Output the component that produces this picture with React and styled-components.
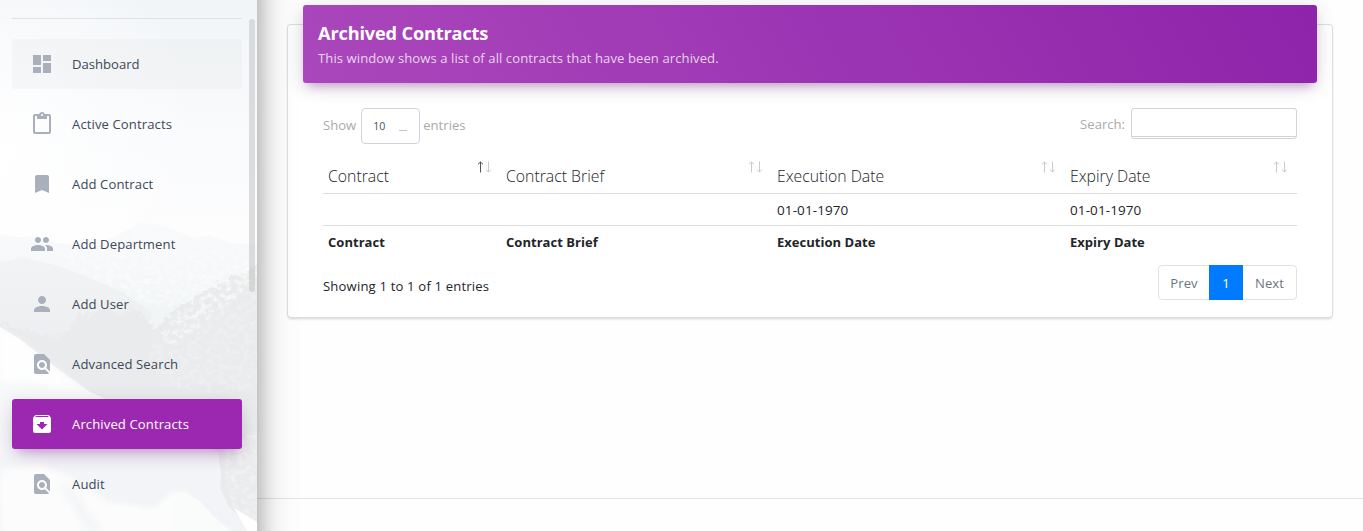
import React from 'react';
import styled, { createGlobalStyle, css } from 'styled-components';
import { MdDashboard, MdContentPaste, MdBookmark, MdPeople, MdPerson, MdFindInPage, MdArchive } from 'react-icons/md';

const Global = createGlobalStyle`
  *, *::before, *::after { box-sizing: border-box; }
  body { margin: 0; background: #fefefe; overflow: hidden; font: 13.1px/20px "Open Sans", "Noto Sans", sans-serif; color: #212529; }
`;

const Page = styled.div`
  display: flex;
  height: 531px;
  overflow: hidden;
`;

const Sidebar = styled.aside`
  position: relative;
  z-index: 2;
  flex: 0 0 257px;
  height: 100%;
  padding: 18px 15px 0 12px;
  background: #fafbfc;
  &::after {
    content: '';
    position: absolute;
    left: 100%;
    top: 0;
    bottom: 0;
    width: 46px;
    background: linear-gradient(90deg, rgba(0, 0, 0, .225), rgba(0, 0, 0, .16) 6px, rgba(0, 0, 0, .085) 13px, rgba(0, 0, 0, .035) 21px, rgba(0, 0, 0, .012) 31px, transparent);
    pointer-events: none;
  }
`;

const Backdrop = styled.svg`
  position: absolute;
  inset: 0;
  width: 257px;
  height: 531px;
`;

const ScrollThumb = styled.div`
  position: absolute;
  left: 249px;
  top: 19px;
  width: 6px;
  height: 273px;
  border-radius: 3px;
  background: rgba(190, 190, 190, .5);
`;

const Nav = styled.nav`
  position: relative;
  display: flex;
  flex-direction: column;
  gap: 10px;
  padding-top: 20px;
  border-top: 1px solid #dfe2e4;
`;

const NavItem = styled.a`
  display: flex;
  align-items: center;
  flex: 0 0 50px;
  padding-left: 18px;
  border-radius: 3px;
  color: #3c4858;
  letter-spacing: .1px;
  svg { width: 24px; height: 24px; margin-right: 18px; color: #a9afbb; }
  ${p => p.$hover && css`background: rgba(210, 205, 205, .13); letter-spacing: 0;`}
  ${p => p.$active && css`
    background: #9c27b0;
    color: #fff;
    box-shadow: 0 12px 20px -10px rgba(156, 39, 176, .28), 0 4px 20px 0 rgba(0, 0, 0, .12), 0 7px 8px -5px rgba(156, 39, 176, .2);
    svg { color: #fff; }
  `}
`;

const Main = styled.main`
  flex: 1;
  display: flex;
  flex-direction: column;
  padding-top: 25px;
`;

const Card = styled.section`
  margin: 0 31px;
  height: 292px;
  padding: 0 15px;
  background: #fff;
  border-radius: 3px;
  box-shadow: 0 0 0 1px #dedede, 0 2px 3px rgba(0, 0, 0, .17);
`;

const CardHeader = styled.header`
  height: 78px;
  margin-top: -20px;
  padding: 16px 15px 0;
  border-radius: 3px;
  background: linear-gradient(60deg, #ab47bc, #8e24aa);
  box-shadow: 0 4px 20px 0 rgba(0, 0, 0, .14), 0 7px 10px -5px rgba(156, 39, 176, .4);
  color: #fff;
`;

const Title = styled.h4`
  margin: 0;
  font-size: 18.2px;
  line-height: 24px;
  font-weight: 700;
  letter-spacing: -.17px;
`;

const Subtitle = styled.p`
  margin: 3px 0 0;
  line-height: 20px;
  letter-spacing: .07px;
  color: rgba(255, 255, 255, .78);
`;

const CardBody = styled.div`
  padding: 25px 20px 0;
`;

const Toolbar = styled.div`
  display: flex;
  justify-content: space-between;
  height: 51px;
  color: #aaa;
`;

const Control = styled.label`
  display: flex;
  align-items: center;
  height: ${p => p.$h}px;
  gap: ${p => p.$gap}px;
`;

const Caption = styled.span`
  margin-top: ${p => p.$lift || 0}px;
`;

const LengthSelect = styled.span`
  display: flex;
  align-items: center;
  justify-content: space-between;
  width: 59px;
  height: 36px;
  margin: 0 -1px 0 1px;
  padding: 0 12px 0 11px;
  border: 1px solid #d2d2dc;
  border-radius: 4px;
  background: #fff;
  color: #495057;
  font-size: 10.6px;
`;

const Dash = styled.i`
  width: 8px;
  height: 1px;
  margin-top: 9px;
  background: #c4c4c4;
`;

const SearchBox = styled.span`
  width: 166px;
  height: 31px;
  border: 1px solid #d2d2d8;
  border-radius: 3px;
  background: linear-gradient(#d2d2d8, #d2d2d8) 0 27px / 100% 1px no-repeat #fff;
`;

const Table = styled.table`
  width: 974px;
  table-layout: fixed;
  border-collapse: collapse;
`;

const Row = styled.tr`
  height: ${p => p.$h}px;
  border-bottom: ${p => (p.$line ? '1px solid #dcdcdc' : 'none')};
`;

const Cell = styled.td`
  padding: 2px 5px 0;
  text-align: left;
  font-weight: ${p => (p.$bold ? 700 : 400)};
  font-size: ${p => (p.$bold ? 13 : 13.5)}px;
  letter-spacing: ${p => (p.$bold ? .03 : .1)}px;
`;

const HeadCell = styled.th`
  padding: 0 5px;
  width: ${p => p.$w}px;
  text-align: left;
  font-weight: 300;
  vertical-align: top;
`;

const HeadInner = styled.div`
  display: flex;
  justify-content: space-between;
  padding-right: 4px;
  font-size: 15.8px;
  line-height: 34px;
  height: 33px;
`;

const SortIcon = styled.svg`
  width: 15px;
  height: 12px;
  margin-top: 2px;
  fill: none;
`;

const Bottom = styled.div`
  display: flex;
  justify-content: space-between;
  padding-top: 8px;
`;

const Info = styled.span`
  padding-top: 11px;
  letter-spacing: .17px;
`;

const Pager = styled.div`
  display: flex;
  height: 35px;
  border: 1px solid #dee2e6;
  border-radius: 4px;
`;

const PageButton = styled.span`
  width: ${p => p.$w}px;
  margin: -1px 0;
  line-height: 36px;
  text-align: center;
  letter-spacing: .1px;
  color: ${p => (p.$active ? '#fff' : '#6c757d')};
  background: ${p => (p.$active ? '#007bff' : 'transparent')};
`;

const FooterRule = styled.footer`
  height: 33px;
  margin-top: auto;
  border-top: 1px solid #e3e3e3;
`;

const NAV = [
  { label: 'Dashboard', Icon: MdDashboard, hover: true },
  { label: 'Active Contracts', Icon: MdContentPaste },
  { label: 'Add Contract', Icon: MdBookmark },
  { label: 'Add Department', Icon: MdPeople },
  { label: 'Add User', Icon: MdPerson },
  { label: 'Advanced Search', Icon: MdFindInPage },
  { label: 'Archived Contracts', Icon: MdArchive, active: true },
  { label: 'Audit', Icon: MdFindInPage },
];

const COLUMNS = [
  { label: 'Contract', w: 178, sorted: true },
  { label: 'Contract Brief', w: 271 },
  { label: 'Execution Date', w: 293 },
  { label: 'Expiry Date', w: 232 },
];

function Mountains() {
  return (
    <Backdrop viewBox="0 0 257 531" aria-hidden="true">
      <defs>
        <linearGradient id="sky" x1="0" y1="0" x2="0" y2="1">
          <stop offset="0" stopColor="#f2f5f8" />
          <stop offset=".45" stopColor="#f8fafc" />
          <stop offset=".8" stopColor="#fdfdfe" />
          <stop offset="1" stopColor="#fdfdfd" />
        </linearGradient>
        <radialGradient id="glow" cx="0" cy=".55" r=".8">
          <stop offset="0" stopColor="#fff" stopOpacity=".95" />
          <stop offset="1" stopColor="#fff" stopOpacity="0" />
        </radialGradient>
        <linearGradient id="far" x1="0" y1="0" x2="0" y2="1">
          <stop offset="0" stopColor="#f9fafb" />
          <stop offset=".5" stopColor="#f2f5f6" />
          <stop offset="1" stopColor="#eef0f1" />
        </linearGradient>
        <linearGradient id="near" x1="0" y1="0" x2="0" y2="1">
          <stop offset="0" stopColor="#f1f3f4" />
          <stop offset="1" stopColor="#ebeced" />
        </linearGradient>
        <linearGradient id="snow" x1="0" y1="0" x2="0" y2="1">
          <stop offset="0" stopColor="#fdfdfe" />
          <stop offset=".4" stopColor="#f6f7f9" />
          <stop offset="1" stopColor="#f1f3f6" />
        </linearGradient>
        <filter id="soft" x="-10%" y="-10%" width="120%" height="120%" colorInterpolationFilters="sRGB">
          <feGaussianBlur stdDeviation="3" />
        </filter>
        <filter id="rock" x="0" y="0" width="100%" height="100%" colorInterpolationFilters="sRGB">
          <feTurbulence type="fractalNoise" baseFrequency=".16 .2" numOctaves="4" seed="8" />
          <feColorMatrix values="0 0 0 0 1  0 0 0 0 1  0 0 0 0 1  3 0 0 0 -1.3" result="n" />
          <feComposite in="n" in2="SourceGraphic" operator="in" />
          <feGaussianBlur stdDeviation=".5" />
        </filter>
        <filter id="edge" x="-5%" y="-5%" width="110%" height="110%" colorInterpolationFilters="sRGB">
          <feTurbulence type="fractalNoise" baseFrequency=".2" numOctaves="3" seed="3" result="t" />
          <feDisplacementMap in="SourceGraphic" in2="t" scale="14" xChannelSelector="R" yChannelSelector="G" />
        </filter>
      </defs>
      <rect width="257" height="280" fill="url(#sky)" />
      <rect width="257" height="280" fill="url(#glow)" />
      <path d="M0 234l17 3 20-1 20 7 38 3 25-12 20-12 24 4 30 12 16-3 20 8 27 2v160H0z" fill="url(#far)" />
      <path d="M60 252l34-10 34-8 34 8 26 14 30-8 39 10v28l-80 24-60-15-34-20z" fill="#fff" opacity=".5" filter="url(#rock)" />
      <path d="M0 262l24-4 28 6 34 12 36 16 30 20-20 80H0z" fill="url(#near)" />
      <path d="M275 258l-46 21-34 18-26 18-14 13-14-16-10-3-14 7-10-14-14 14-14-4-8 18-20 8-35-12-30-5v66l70 53 80 10 43 24 18 36 18 60h50z" fill="#eaebec" filter="url(#edge)" />
      <path d="M257 262l-40 26-42 26-22 26-4 26 20 22 60 8 28-12z" fill="#fff" opacity=".25" filter="url(#rock)" />
      <path d="M257 262l-36 24-34 19-26 28 10 12 34-22 52-44z" fill="#fff" opacity=".6" filter="url(#rock)" />
      <path d="M220 450l37-20v101l-24-20z" fill="#fff" opacity=".35" filter="url(#rock)" />
      <path d="M0 327l20 12 34 27 36 26 36 16 50 22 42 22 3 22-1 14 9 19 28 24H0z" fill="url(#snow)" />
      <path d="M0 329l18 11 34 27 30 22-30-1-26-8L0 382z" fill="#fff" opacity=".8" filter="url(#soft)" />
      <path d="M0 470l40-6 38 18 30 20 46 6 18-16 14 2 18 18 36 25H0z" fill="#fcfcfc" filter="url(#soft)" />
      <path d="M172 494l12-2 16 9 20 22 14 10H170z" fill="#fafbfb" />
      <path d="M234 508l23 14v9h-10z" fill="#fff" />
      <path d="M60 485l12 2 30 44H86z" fill="#f3f5f7" filter="url(#soft)" />
    </Backdrop>
  );
}

function Sort({ sorted }) {
  return (
    <SortIcon viewBox="0 0 15 12">
      <path d="M3.5 11.5V1M1 3.3L3.5 1 6 3.3" stroke={sorted ? '#4b5560' : '#cbcbcb'} />
      <path d="M11.5 .5V11M9 8.7l2.5 2.3L14 8.7" stroke="#cbcbcb" />
    </SortIcon>
  );
}

export default function App() {
  return (
    <Page>
      <Global />
      <Sidebar>
        <Mountains />
        <Nav>
          {NAV.map(({ label, Icon, hover, active }) => (
            <NavItem key={label} $hover={hover} $active={active}>
              <Icon />{label}
            </NavItem>
          ))}
        </Nav>
        <ScrollThumb />
      </Sidebar>
      <Main>
        <Card>
          <CardHeader>
            <Title>Archived Contracts</Title>
            <Subtitle>This window shows a list of all contracts that have been archived.</Subtitle>
          </CardHeader>
          <CardBody>
            <Toolbar>
              <Control $h={36} $gap={4}>
                <Caption $lift={-2}>Show</Caption>
                <LengthSelect>10<Dash /></LengthSelect>
                <Caption $lift={-2}>entries</Caption>
              </Control>
              <Control $h={31} $gap={6}>
                <Caption>Search:</Caption>
                <SearchBox />
              </Control>
            </Toolbar>
            <Table>
              <thead>
                <Row $h={34} $line>
                  {COLUMNS.map(c => (
                    <HeadCell key={c.label} $w={c.w}>
                      <HeadInner>{c.label}<Sort sorted={c.sorted} /></HeadInner>
                    </HeadCell>
                  ))}
                </Row>
              </thead>
              <tbody>
                <Row $h={32} $line>
                  <Cell /><Cell /><Cell>01-01-1970</Cell><Cell>01-01-1970</Cell>
                </Row>
              </tbody>
              <tfoot>
                <Row $h={32}>
                  {COLUMNS.map(c => <Cell key={c.label} $bold>{c.label}</Cell>)}
                </Row>
              </tfoot>
            </Table>
            <Bottom>
              <Info>Showing 1 to 1 of 1 entries</Info>
              <Pager>
                <PageButton $w={50}>Prev</PageButton>
                <PageButton $w={34} $active>1</PageButton>
                <PageButton $w={53}>Next</PageButton>
              </Pager>
            </Bottom>
          </CardBody>
        </Card>
        <FooterRule />
      </Main>
    </Page>
  );
}
